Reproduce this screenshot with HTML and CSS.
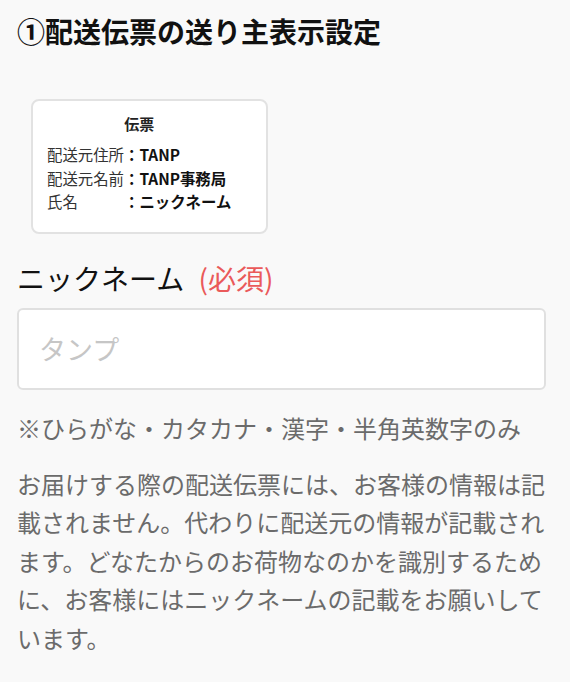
FILE: index.html
```html
<!DOCTYPE html>
<html lang="ja">
<head>
    <meta charset="UTF-8">
    <meta name="viewport" content="width=device-width, initial-scale=1.0">
    <title>送り主表示設定</title>
    <link rel="stylesheet" href="styles.css">
</head>
<body>
    <div class="container">
        <h2 class="section-title">①配送伝票の送り主表示設定</h2>

        <div class="slip">
            <div class="slip-inner">
                <div class="slip-title">伝票</div>
                <div class="slip-row">
                    <span class="slip-label">配送元住所</span><span class="slip-value">：TANP</span>
                </div>
                <div class="slip-row">
                    <span class="slip-label">配送元名前</span><span class="slip-value">：TANP事務局</span>
                </div>
                <div class="slip-row">
                    <span class="slip-label">氏名</span><span class="slip-value">：ニックネーム</span>
                </div>
            </div>
        </div>

        <div class="form-group">
            <label for="nickname">ニックネーム <span class="required">(必須)</span></label>
            <input type="text" id="nickname" placeholder="タンプ">
        </div>

        <p class="note">※ひらがな・カタカナ・漢字・半角英数字のみ</p>

        <p class="description">お届けする際の配送伝票には、お客様の情報は記載されません。代わりに配送元の情報が記載されます。どなたからのお荷物なのかを識別するために、お客様にはニックネームの記載をお願いしています。</p>
    </div>
</body>
</html>
```

FILE: styles.css
```css
body {
    font-family: "Noto Sans CJK JP", "Noto Sans", sans-serif;
    margin: 0;
    background-color: #f9f9f9;
    color: #111;
}

.container {
    padding: 12px 24px 20px 17px;
}

.section-title {
    font-size: 28px;
    font-weight: 700;
    line-height: 39px;
    margin: 0;
}

/* 伝票のサンプル */
.slip {
    width: 237px;
    box-sizing: border-box;
    margin: 48px 0 0 14px;
    padding: 11px 14px 18px;
    background-color: #fff;
    border: 2px solid #e2e2e2;
    border-radius: 8px;
}

.slip-inner {
    display: inline-block;
}

.slip-title {
    font-size: 15px;
    font-weight: 700;
    line-height: 23px;
    text-align: center;
    margin-bottom: 8px;
    color: #222;
}

.slip-row {
    font-size: 15.4px;
    line-height: 23.5px;
    white-space: nowrap;
}

.slip-label {
    display: inline-block;
    width: 77px;
    color: #333;
}

.slip-value {
    font-weight: 700;
    color: #111;
}

.form-group {
    margin-top: 25px;
}

label {
    display: block;
    font-size: 28px;
    line-height: 38px;
    margin-bottom: 11px;
}

.required {
    color: #ea5a5a;
    margin-left: 8px;
}

input[type="text"] {
    width: 100%;
    height: 82px;
    box-sizing: border-box;
    padding: 0 20px;
    border: 2px solid #e0e0e0;
    border-radius: 6px;
    background-color: #fff;
    font-family: inherit;
    font-size: 27px;
    color: #111;
    outline: none;
}

input::placeholder {
    color: #c6c6c6;
}

.note {
    margin: 21px 0 0;
    font-size: 24px;
    line-height: 34px;
    color: #6b6b6b;
}

.description {
    margin: 20px 0 0;
    font-size: 24px;
    line-height: 38.5px;
    color: #6b6b6b;
}
```
